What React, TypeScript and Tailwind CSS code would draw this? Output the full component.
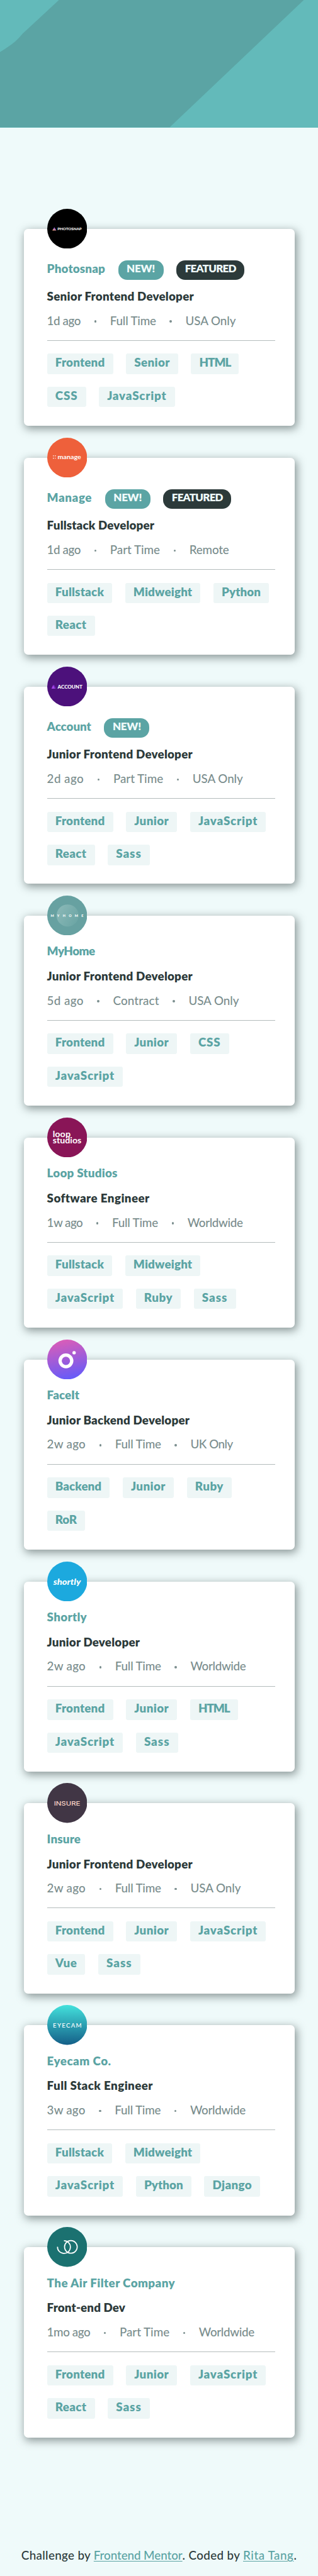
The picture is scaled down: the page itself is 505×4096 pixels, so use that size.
import { useLayoutEffect, useRef, useState } from "react";
import type { ReactNode } from "react";
import clsx from "clsx";

type Job = {
  company: string;
  companyWidth: number;
  logo: ReactNode;
  isNew?: boolean;
  featured?: boolean;
  position: string;
  positionWidth: number;
  posted: string;
  contract: string;
  location: string;
  tags: string[];
};

const META_WIDTHS: Record<string, number> = {
  "1d ago": 53.5,
  "2d ago": 58.6,
  "5d ago": 58.2,
  "1w ago": 56.7,
  "2w ago": 61.5,
  "3w ago": 61,
  "1mo ago": 68.6,
  "Full Time": 73,
  "Part Time": 79.2,
  Contract: 73.2,
  "USA Only": 80,
  "UK Only": 67.4,
  Worldwide: 88,
  Remote: 63,
};

const TAG_WIDTHS: Record<string, number> = {
  Frontend: 105,
  Senior: 83,
  HTML: 76,
  CSS: 62,
  JavaScript: 120.7,
  Fullstack: 103.7,
  Midweight: 119.8,
  Python: 88.3,
  React: 76,
  Junior: 81.4,
  Sass: 67,
  Ruby: 71.6,
  Backend: 99.8,
  RoR: 60.5,
  Vue: 60.8,
  Django: 88.9,
};

/** Single line of text, tracked so that it fills the given width. */
function Tracked({ text, width, className }: { text: string; width: number; className?: string }) {
  const ref = useRef<HTMLSpanElement>(null);
  const [spacing, setSpacing] = useState(0);
  useLayoutEffect(() => {
    if (ref.current) {
      const natural = ref.current.getBoundingClientRect().width;
      setSpacing((width - natural) / text.length);
    }
  }, [text, width]);
  return (
    <span
      ref={ref}
      className={clsx("inline-block whitespace-pre", className)}
      style={{ letterSpacing: `${spacing}px` }}
    >
      {text}
    </span>
  );
}

function Disc({ fill, children }: { fill: string; children: ReactNode }) {
  return (
    <svg viewBox="0 0 94 94" className="absolute -top-[32px] left-[37px] size-[63.4px]">
      <circle cx="47" cy="47" r="47" fill={fill} />
      {children}
    </svg>
  );
}

const LATO = "Lato, sans-serif";

const logos = {
  photosnap: (
    <Disc fill="#000">
      <defs>
        <linearGradient id="ps" x1="0.2" y1="1" x2="0.7" y2="0">
          <stop offset="0" stopColor="#ffb48a" />
          <stop offset="0.5" stopColor="#a867b0" />
          <stop offset="1" stopColor="#5a6be8" />
        </linearGradient>
      </defs>
      <path d="M12 51 L16.8 43.4 L21.5 51 Z" fill="url(#ps)" />
      <text x="24" y="50.6" textLength="57" lengthAdjust="spacingAndGlyphs" fontFamily={LATO} fontWeight="900" fontSize="9.2" fill="#fff">PHOTOSNAP</text>
    </Disc>
  ),
  manage: (
    <Disc fill="#ee603b">
      <g fill="#fff">
        <circle cx="14.6" cy="42.8" r="1.2" />
        <circle cx="19.2" cy="42.8" r="1.2" />
        <circle cx="14.6" cy="48.4" r="1.2" />
        <circle cx="19.2" cy="48.4" r="1.2" opacity="0.7" />
      </g>
      <text x="24.6" y="50" textLength="55" lengthAdjust="spacingAndGlyphs" fontFamily={LATO} fontWeight="700" fontSize="15" fill="#fff">manage</text>
    </Disc>
  ),
  account: (
    <Disc fill="#4c117b">
      <path d="M10 52 L14.2 43 L18.4 52 Z" fill="#a644ea" />
      <path d="M14.8 44.5 L16.6 43 L21 52 L18.4 52 Z" fill="#7026b4" />
      <text x="24.5" y="52.2" textLength="58.5" lengthAdjust="spacingAndGlyphs" fontFamily={LATO} fontWeight="900" fontSize="11.5" fill="#fff">ACCOUNT</text>
    </Disc>
  ),
  myhome: (
    <Disc fill="#67a1a1">
      <defs>
        <linearGradient id="mh" x1="0" y1="0.2" x2="1" y2="0.8">
          <stop offset="0" stopColor="#8ab8b7" />
          <stop offset="1" stopColor="#6ba5a4" />
        </linearGradient>
      </defs>
      <circle cx="48" cy="47" r="26" fill="url(#mh)" />
      <text x="8" y="50" textLength="77" fontFamily={LATO} fontWeight="900" fontSize="8" fill="#fff">MYHOME</text>
    </Disc>
  ),
  loop: (
    <Disc fill="#891557">
      <g fontFamily={LATO} fontWeight="700" fontSize="20.5" fill="#fff">
        <text x="13" y="46.4" textLength="42" lengthAdjust="spacingAndGlyphs">loop</text>
        <text x="13" y="61.3" textLength="67.5" lengthAdjust="spacingAndGlyphs">studios</text>
      </g>
    </Disc>
  ),
  faceit: (
    <Disc fill="url(#fi)">
      <defs>
        <linearGradient id="fi" x1="0.4" y1="0" x2="0.6" y2="1">
          <stop offset="0" stopColor="#da5db8" />
          <stop offset="1" stopColor="#645afa" />
        </linearGradient>
      </defs>
      <circle cx="44" cy="50.2" r="13.7" fill="none" stroke="#fff" strokeWidth="7.8" />
      <circle cx="63.3" cy="31" r="4" fill="#fff" />
    </Disc>
  ),
  shortly: (
    <Disc fill="#1ca9de">
      <text x="14.5" y="54.7" textLength="64.5" lengthAdjust="spacingAndGlyphs" fontFamily={LATO} fontStyle="italic" fontWeight="900" fontSize="20" fill="#fff">shortly</text>
    </Disc>
  ),
  insure: (
    <Disc fill="#413645">
      <text x="15.8" y="53.2" textLength="62" lengthAdjust="spacingAndGlyphs" fontFamily="Inter, sans-serif" fontWeight="500" fontSize="14" fill="#f8d3c5">INSURE</text>
    </Disc>
  ),
  eyecam: (
    <Disc fill="url(#ec)">
      <defs>
        <linearGradient id="ec" x1="0.5" y1="0" x2="0.5" y2="1">
          <stop offset="0" stopColor="#43e1dc" />
          <stop offset="1" stopColor="#145f88" />
        </linearGradient>
      </defs>
      <text x="13.4" y="52.7" textLength="67.5" fontFamily={LATO} fontWeight="500" fontSize="14.4" fill="#fff">EYECAM</text>
    </Disc>
  ),
  air: (
    <Disc fill="#1b7170">
      <g fill="none" stroke="#fff" strokeWidth="2.5">
        <path d="M24.2 46.6 A15.2 15 0 1 0 39.4 32.4" />
        <circle cx="55.7" cy="47" r="14.9" />
      </g>
    </Disc>
  ),
};

const jobs: Job[] = [
  { company: "Photosnap", companyWidth: 92.4, logo: logos.photosnap, isNew: true, featured: true, position: "Senior Frontend Developer", positionWidth: 233.3, posted: "1d ago", contract: "Full Time", location: "USA Only", tags: ["Frontend", "Senior", "HTML", "CSS", "JavaScript"] },
  { company: "Manage", companyWidth: 71.5, logo: logos.manage, isNew: true, featured: true, position: "Fullstack Developer", positionWidth: 170.5, posted: "1d ago", contract: "Part Time", location: "Remote", tags: ["Fullstack", "Midweight", "Python", "React"] },
  { company: "Account", companyWidth: 70.2, logo: logos.account, isNew: true, position: "Junior Frontend Developer", positionWidth: 231.3, posted: "2d ago", contract: "Part Time", location: "USA Only", tags: ["Frontend", "Junior", "JavaScript", "React", "Sass"] },
  { company: "MyHome", companyWidth: 76, logo: logos.myhome, position: "Junior Frontend Developer", positionWidth: 231.3, posted: "5d ago", contract: "Contract", location: "USA Only", tags: ["Frontend", "Junior", "CSS", "JavaScript"] },
  { company: "Loop Studios", companyWidth: 112, logo: logos.loop, position: "Software Engineer", positionWidth: 162.6, posted: "1w ago", contract: "Full Time", location: "Worldwide", tags: ["Fullstack", "Midweight", "JavaScript", "Ruby", "Sass"] },
  { company: "FaceIt", companyWidth: 51.5, logo: logos.faceit, position: "Junior Backend Developer", positionWidth: 226.6, posted: "2w ago", contract: "Full Time", location: "UK Only", tags: ["Backend", "Junior", "Ruby", "RoR"] },
  { company: "Shortly", companyWidth: 63.4, logo: logos.shortly, position: "Junior Developer", positionWidth: 147.5, posted: "2w ago", contract: "Full Time", location: "Worldwide", tags: ["Frontend", "Junior", "HTML", "JavaScript", "Sass"] },
  { company: "Insure", companyWidth: 53.5, logo: logos.insure, position: "Junior Frontend Developer", positionWidth: 231.3, posted: "2w ago", contract: "Full Time", location: "USA Only", tags: ["Frontend", "Junior", "JavaScript", "Vue", "Sass"] },
  { company: "Eyecam Co.", companyWidth: 102, logo: logos.eyecam, position: "Full Stack Engineer", positionWidth: 168.3, posted: "3w ago", contract: "Full Time", location: "Worldwide", tags: ["Fullstack", "Midweight", "JavaScript", "Python", "Django"] },
  { company: "The Air Filter Company", companyWidth: 203.5, logo: logos.air, position: "Front-end Dev", positionWidth: 124.5, posted: "1mo ago", contract: "Part Time", location: "Worldwide", tags: ["Frontend", "Junior", "JavaScript", "React", "Sass"] },
];

function Dot() {
  return (
    <span className="flex w-[46.7px] justify-center pt-[3px]">
      <span className="size-[3.4px] rounded-full bg-[#7b8e8e]" />
    </span>
  );
}

function JobCard({ job }: { job: Job }) {
  return (
    <article
      className={clsx(
        "relative w-[430.2px] rounded-[6.5px] bg-white px-[37px] shadow-[2.5px_4px_14px_1px_rgba(44,58,58,0.5)]",
        job.isNew ? "h-[313.6px] pt-[50.5px]" : "h-[302.4px] pt-[46.5px]",
      )}
    >
      {job.logo}
      <div className={clsx("flex items-center text-[#5ba4a4]", job.isNew ? "mb-[16.4px] h-[30.5px]" : "mb-[19.6px] h-5")}>
        <h2 className={clsx("text-[18.8px] leading-5 font-extrabold", job.isNew && "pb-[5px]")}>
          <Tracked text={job.company} width={job.companyWidth} />
        </h2>
        {job.isNew && (
          <span className="ml-[20.6px] flex h-full w-[72px] justify-center rounded-[14px] bg-[#5ba4a4] text-[17px] leading-[26px] font-extrabold text-[#effafa]">
            <Tracked text="NEW!" width={45} />
          </span>
        )}
        {job.featured && (
          <span className="ml-[20.6px] flex h-full w-[108px] justify-center rounded-[14px] bg-[#2c3a3a] text-[17px] leading-[26px] font-extrabold text-[#effafa]">
            <Tracked text="FEATURED" width={81} />
          </span>
        )}
      </div>
      <h3 className="mb-[18.7px] h-5 text-[18.8px] leading-5 font-extrabold text-[#2c3a3a]">
        <Tracked text={job.position} width={job.positionWidth} />
      </h3>
      <div className="flex h-5 items-center text-[18.8px] leading-5 font-medium text-[#7b8e8e]">
        <Tracked text={job.posted} width={META_WIDTHS[job.posted]} />
        <Dot />
        <Tracked text={job.contract} width={META_WIDTHS[job.contract]} />
        <Dot />
        <Tracked text={job.location} width={META_WIDTHS[job.location]} />
      </div>
      <hr className="mt-[21.2px] mb-[20.6px] w-[362.3px] border-[#b4bcbc]" />
      <ul className="flex flex-wrap gap-x-[20.4px] gap-y-[20.1px]">
        {job.tags.map((tag) => (
          <li
            key={tag}
            className="flex h-[32.4px] justify-center rounded-[3px] bg-[#eef6f6] text-[18.8px] leading-[27px] font-extrabold text-[#5ba4a4]"
            style={{ width: TAG_WIDTHS[tag] }}
          >
            <Tracked text={tag} width={TAG_WIDTHS[tag] - 26.4} />
          </li>
        ))}
      </ul>
    </article>
  );
}

export default function App() {
  return (
    <div className="flex h-[4096px] w-[505px] flex-col overflow-hidden bg-[#effafa] font-[Lato,sans-serif]">
      <header className="h-[202.5px] shrink-0 bg-[#63baba]">
        <svg viewBox="0 0 750 301" preserveAspectRatio="none" className="size-full">
          <path d="M139 0 H716.5 L400 301 H0 V123 C20 111 38 99 53 80 Z" fill="#5ba4a4" />
        </svg>
      </header>
      <main className="mt-[161.1px] ml-[37.6px] flex flex-col gap-[50.5px]">
        {jobs.map((job) => (
          <JobCard key={job.company} job={job} />
        ))}
      </main>
      <footer className="mt-[177.5px] ml-[33.8px] flex text-[18.8px] leading-5 font-medium text-[#2c3a3a]">
        <Tracked text="Challenge by " width={115} />
        <a className="text-[#5ba4a4]">
          <Tracked text="Frontend Mentor" width={140.8} className="underline decoration-1 underline-offset-2" />
        </a>
        <Tracked text=". Coded by " width={96.4} />
        <a className="text-[#5ba4a4]">
          <Tracked text="Rita Tang" width={80.4} className="underline decoration-1 underline-offset-2" />
        </a>
        <span>.</span>
      </footer>
    </div>
  );
}
